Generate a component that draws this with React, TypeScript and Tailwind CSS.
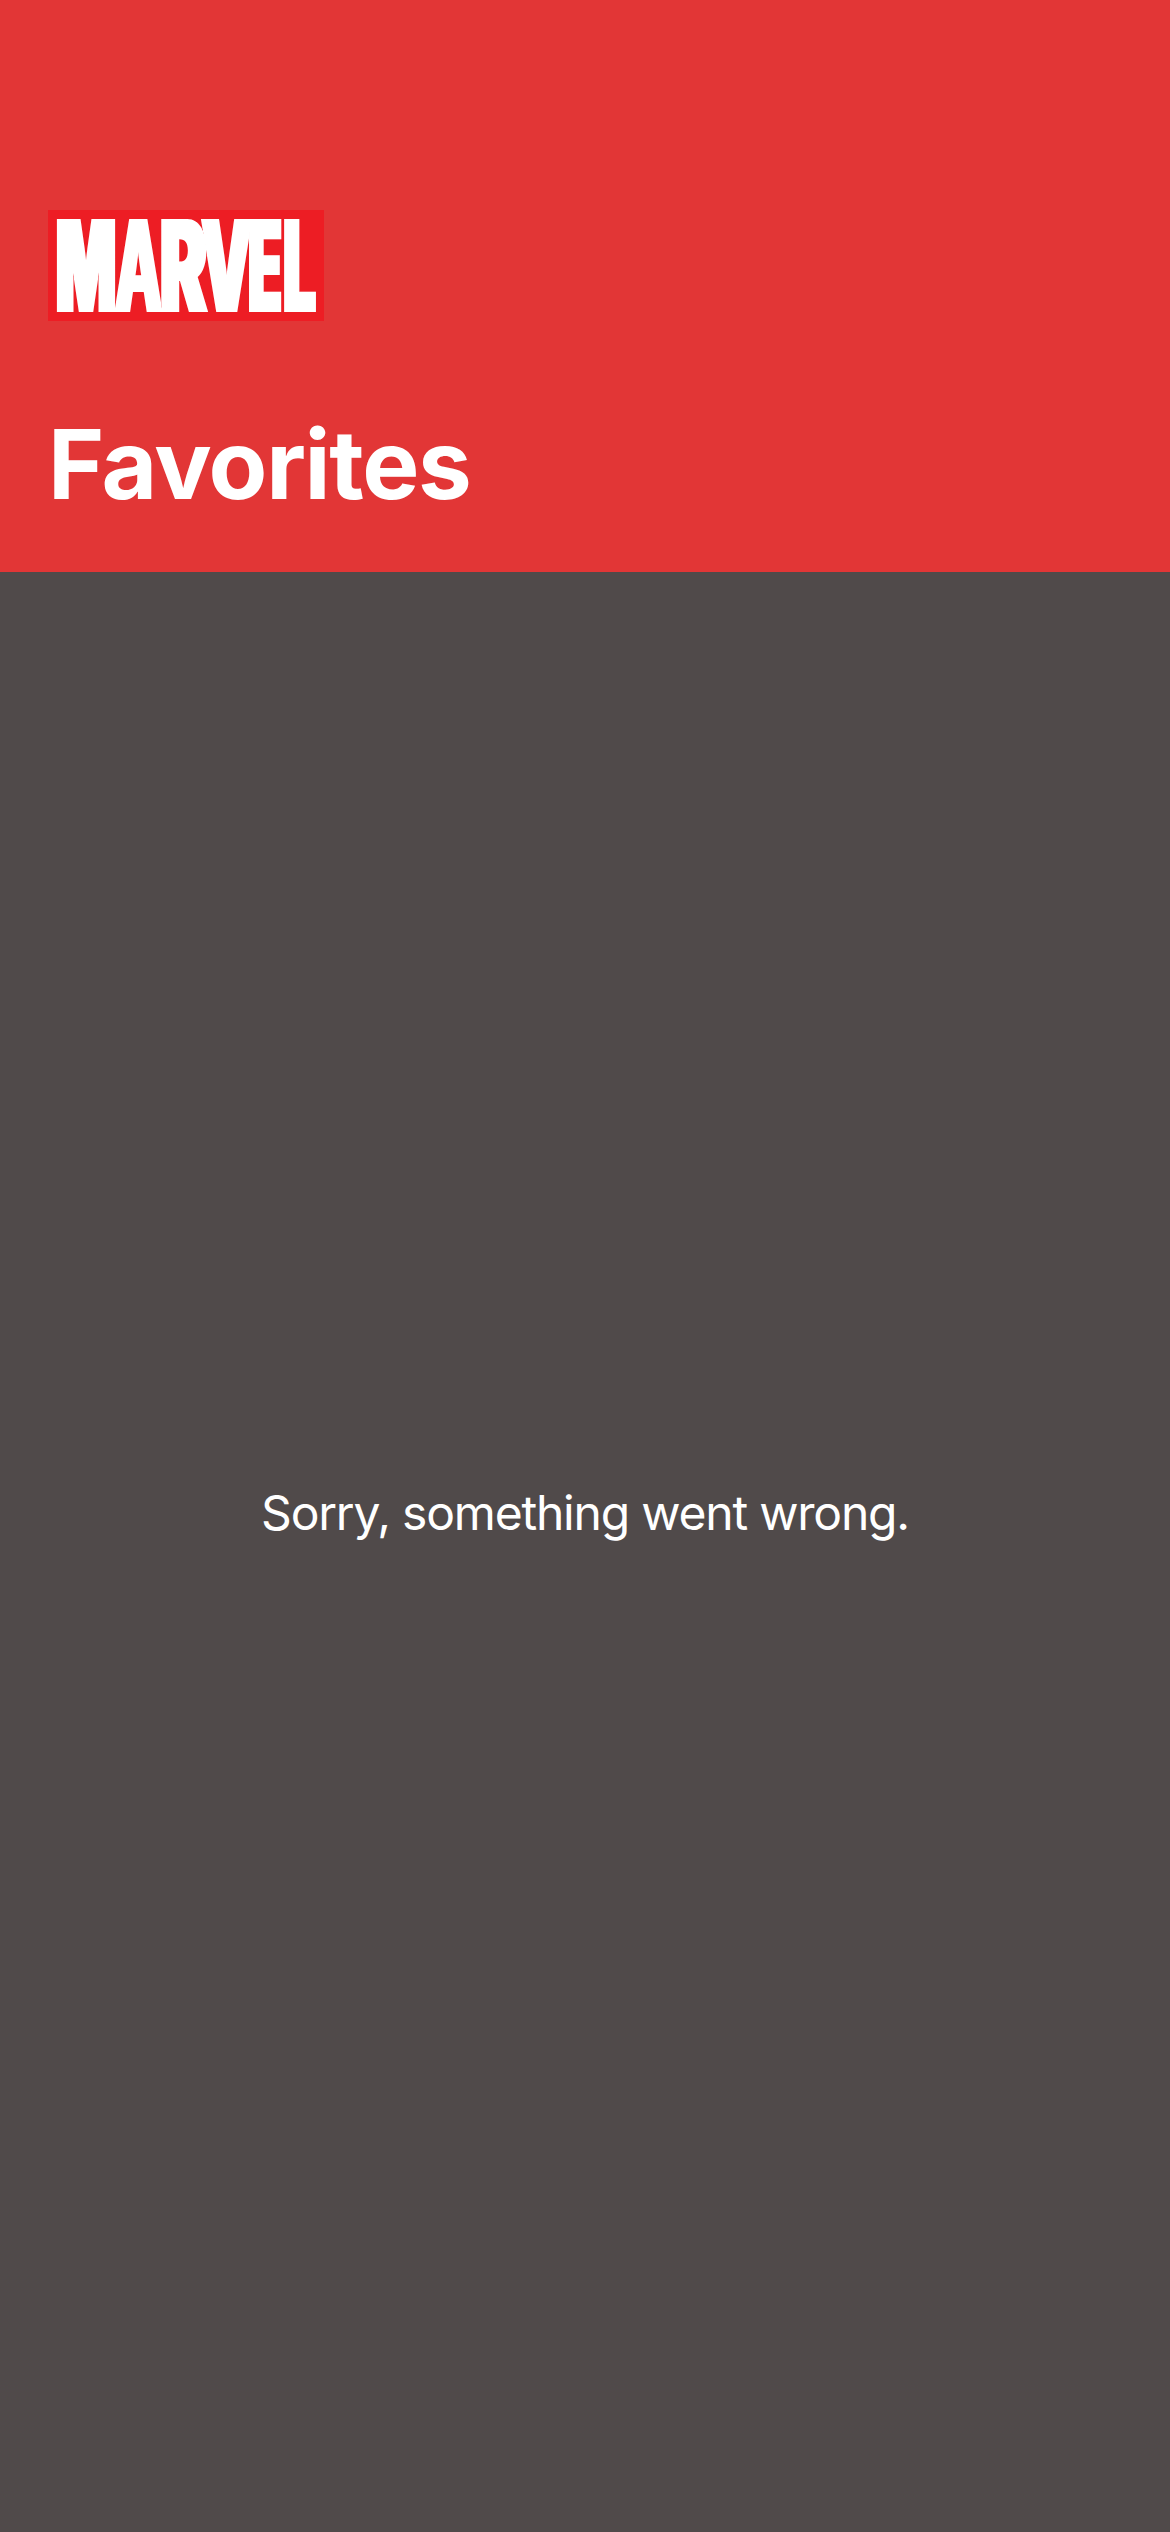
const letters = [
  { char: 'M', x: 8, width: 60, weight: 'font-black' },
  { char: 'A', x: 67, width: 47, weight: 'font-extrabold' },
  { char: 'R', x: 112, width: 47, weight: 'font-black' },
  { char: 'V', x: 153.5, width: 50, weight: 'font-black' },
  { char: 'E', x: 200.6, width: 33, weight: 'font-black' },
  { char: 'L', x: 235.4, width: 32, weight: 'font-black' },
];

function Logo() {
  return (
    <svg className="block h-[111px] w-[276px] bg-[#ed1d24]" viewBox="0 0 276 111" role="img" aria-label="Marvel">
      <defs>
        <filter id="widen" x="-10%" y="-10%" width="120%" height="120%">
          <feMorphology operator="dilate" radius="2 0" />
        </filter>
      </defs>
      <text y="101.5" filter="url(#widen)" className="fill-white font-['Inter',sans-serif] text-[127.3px]">
        {letters.map((l) => (
          <tspan key={l.char} x={l.x} textLength={l.width} lengthAdjust="spacingAndGlyphs" className={l.weight}>
            {l.char}
          </tspan>
        ))}
      </text>
    </svg>
  );
}

export default function App() {
  return (
    <div className="flex h-[2532px] w-[1170px] flex-col bg-[#504a4a] font-['Inter',sans-serif] text-white">
      <header className="flex h-[572px] shrink-0 flex-col bg-[#e23636] px-12 pt-[210px]">
        <Logo />
        <h1 className="mt-[83px] text-[96px] leading-[120px] font-bold tracking-[-1.35px] whitespace-nowrap">Favorites</h1>
      </header>
      <main className="flex flex-1 items-center justify-center pb-[79px]">
        <p className="text-[48px] leading-[58px] tracking-[-1.2px] whitespace-nowrap">Sorry, something went wrong.</p>
      </main>
    </div>
  );
}
